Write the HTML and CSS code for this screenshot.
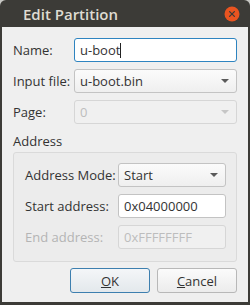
FILE: index.html
```html
<!DOCTYPE html>
<html>
<head>
<meta charset="utf-8">
<link rel="stylesheet" href="styles.css">
</head>
<body>
<div class="window">
  <div class="titlebar">
    <span class="title">Edit Partition</span>
    <span class="close"><svg width="16" height="16" viewBox="0 0 16 16"><circle cx="8" cy="8" r="7.5" fill="#e95420"/><path d="M5.6 5.6 L10.4 10.4 M10.4 5.6 L5.6 10.4" stroke="#3c3b37" stroke-width="1.3" stroke-linecap="round"/></svg></span>
  </div>
  <div class="content">
    <div class="form">
      <label class="lbl">Name:</label>
      <div class="field edit focus"><span>u-boot</span><span class="caret"></span></div>
      <label class="lbl">Input file:</label>
      <div class="field combo"><span>u-boot.bin</span><span class="arrow"></span></div>
      <label class="lbl">Page:</label>
      <div class="field combo disabled"><span>0</span><span class="arrow"></span></div>
    </div>
    <div class="section">Address</div>
    <div class="group">
      <div class="form inner">
        <label class="lbl">Address Mode:</label>
        <div class="field combo"><span>Start</span><span class="arrow"></span></div>
        <label class="lbl">Start address:</label>
        <div class="field edit"><span>0x04000000</span></div>
        <label class="lbl dim">End address:</label>
        <div class="field edit disabled"><span>0xFFFFFFFF</span></div>
      </div>
    </div>
    <div class="buttons">
      <button class="btn default"><u>O</u>K</button>
      <button class="btn"><u>C</u>ancel</button>
    </div>
  </div>
</div>
</body>
</html>
```

FILE: styles.css
```css
html, body {
  margin: 0;
  padding: 0;
  background: #c8c8c4;
}
body {
  width: 250px;
  height: 305px;
  overflow: hidden;
  font-family: "Open Sans", "DejaVu Sans", sans-serif;
  font-size: 13px;
  color: #3c3c3c;
}
.window {
  width: 250px;
  height: 305px;
  box-sizing: border-box;
  background: #3c3b37;
  border-radius: 6px 6px 0 0;
  display: flex;
  flex-direction: column;
  padding: 0 2px 3px 2px;
}
.titlebar {
  height: 27px;
  flex: none;
  display: flex;
  align-items: center;
  justify-content: space-between;
  padding: 0 8px 0 21px;
}
.title {
  color: #dfdbd2;
  font-size: 15px;
  font-weight: 600;
}
.close {
  display: flex;
  width: 16px;
  height: 16px;
}
.content {
  flex: 1;
  background: #efefef;
  padding: 11px 11px 0 11px;
  display: flex;
  flex-direction: column;
}
.form {
  display: grid;
  grid-template-columns: 61px 163px;
  grid-auto-rows: 24px;
  row-gap: 7px;
  align-items: center;
}
.lbl {
  color: #333;
  white-space: nowrap;
  line-height: 18px;
}
.lbl.dim { color: #b4b4b4; }
.field {
  height: 24px;
  box-sizing: border-box;
  border: 1px solid #c3c3c3;
  border-radius: 3px;
  background: #fff;
  display: flex;
  align-items: center;
  padding: 0 5px;
  color: #333;
  line-height: 18px;
}
.field.focus { border-color: #2e84c0; }
.caret {
  display: inline-block;
  width: 1px;
  height: 15px;
  background: #222;
}
.combo {
  background: linear-gradient(#fbfbfb, #efefef);
  justify-content: space-between;
}
.arrow {
  width: 0;
  height: 0;
  border-left: 4px solid transparent;
  border-right: 4px solid transparent;
  border-top: 4px solid #5a5a5a;
  margin-right: 2px;
}
.field.disabled {
  background: #f0f0f0;
  border-color: #d6d6d6;
  color: #bdbdbd;
}
.field.disabled .arrow { border-top-color: #c6c6c6; }
.section {
  margin-top: 8px;
  height: 18px;
  line-height: 18px;
  color: #333;
}
.group {
  margin-top: 2px;
  border: 1px solid #dadada;
  border-radius: 3px;
  background: #ececec;
  padding: 10px 11px 12px 11px;
}
.form.inner {
  grid-template-columns: 93px 108px;
}
.buttons {
  display: flex;
  justify-content: flex-end;
  gap: 7px;
  margin-top: 6px;
}
.btn {
  width: 80px;
  height: 25px;
  box-sizing: border-box;
  border: 1px solid #b8b8b8;
  border-radius: 3px;
  background: linear-gradient(#fbfbfb, #ececec);
  font-family: inherit;
  font-size: 13px;
  color: #333;
  padding: 0;
}
.btn.default {
  border-color: #3d7faf;
  background: linear-gradient(#f4f6f8, #e3e8ec);
}
```
